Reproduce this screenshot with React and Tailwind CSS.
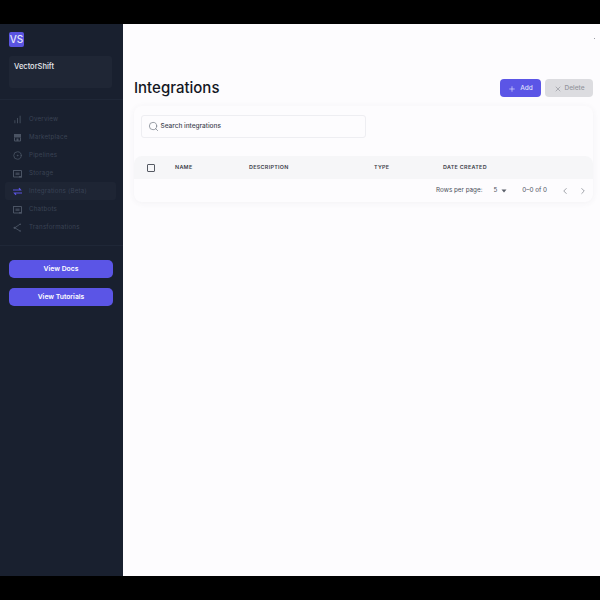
import React from 'react';
import { ChartNoAxesColumnIncreasing, CircleDot, Search, Plus, X, ChevronLeft, ChevronRight } from 'lucide-react';

// Small nav glyphs that lucide has no close match for
const StoreGlyph = ({ className }) => (
  <svg width="9" height="9" viewBox="0 0 9 9" className={className}>
    <path d="M1 1h7v3.5H1z" fill="currentColor" />
    <path d="M1.5 4.5v3.5h6V4.5" fill="none" stroke="currentColor" />
    <path d="M3.5 5.5h2v2.5h-2z" fill="currentColor" />
  </svg>
);

const BoxGlyph = ({ className }) => (
  <svg width="9" height="9" viewBox="0 0 9 9" className={className}>
    <path d="M.5 1.5h8v6.5h-8z" fill="none" stroke="currentColor" />
    <path d="M2.5 3.5h4v2.5h-4z" fill="currentColor" opacity="0.7" />
    <path d="M0 1h3v1H0zM6 7h3v1.5H6z" fill="currentColor" />
  </svg>
);

const BarsGlyph = ({ className }) => (
  <svg width="9" height="9" viewBox="0 0 9 9" className={className}>
    <path d="M0 3h7.5L6 1.2M9 6H1.5L3 7.8" fill="none" stroke="currentColor" strokeWidth="1.2" />
  </svg>
);

const ForkGlyph = ({ className }) => (
  <svg width="9" height="9" viewBox="0 0 9 9" className={className}>
    <path d="M7 1.2 1.8 4.8 7 8" fill="none" stroke="currentColor" strokeWidth="0.9" />
    <circle cx="1.6" cy="4.8" r="1.1" fill="currentColor" />
    <circle cx="7.2" cy="1.2" r="0.8" fill="currentColor" />
    <circle cx="7.2" cy="8" r="0.8" fill="currentColor" />
  </svg>
);

const NAV_ITEMS = [
  { label: 'Overview', icon: ChartNoAxesColumnIncreasing },
  { label: 'Marketplace', icon: StoreGlyph },
  { label: 'Pipelines', icon: CircleDot },
  { label: 'Storage', icon: BoxGlyph },
  { label: 'Integrations (Beta)', icon: BarsGlyph, active: true },
  { label: 'Chatbots', icon: BoxGlyph },
  { label: 'Transformations', icon: ForkGlyph },
];

const COLUMNS = [
  { label: 'NAME', width: 'w-[74px]' },
  { label: 'DESCRIPTION', width: 'w-[125px]' },
  { label: 'TYPE', width: 'w-[69px]' },
  { label: 'DATE CREATED', width: 'w-[100px]' },
];

const Sidebar = () => (
  <aside className="w-[123px] shrink-0 bg-[#19202f] flex flex-col">
    {/* Logo */}
    <div className="pt-[8px] pl-[9px]">
      <div className="w-[15px] h-[15px] rounded-[2px] bg-[#5a54e0] text-[#e4e6fa] text-[10px] leading-[15px] text-center font-medium">VS</div>
    </div>

    {/* Workspace box */}
    <div className="mt-[9px] mx-[9px] h-[32px] w-[103px] rounded-[3px] bg-[#1f2635] px-[5px] pt-[5px]">
      <span className="block text-[7.5px] leading-[12px] font-medium text-[#e8e9ee]">VectorShift</span>
    </div>

    <div className="mt-[11px] h-px bg-[#1f2737]" />

    {/* Nav */}
    <nav className="mt-[10px] flex flex-col pl-[5px] pr-[7px]">
      {NAV_ITEMS.map(({ label, icon: Icon, active }) => (
        <div key={label} className={`h-[18px] flex items-center pl-[8px] rounded-[3px] ${active ? 'bg-[#1e2534]' : ''}`}>
          <Icon size={9} strokeWidth={2.25} className={active ? 'text-[#5a54e0]' : 'text-[#4a5363]'} />
          <span className="ml-[7px] text-[6.2px] tracking-[0.2px] text-[#3a4354]">{label}</span>
        </div>
      ))}
    </nav>

    <div className="mt-[9px] h-px bg-[#1f2737]" />

    {/* Links */}
    <div className="mt-[14px] px-[9px] flex flex-col gap-[10px]">
      <button className="h-[18px] w-[104px] rounded-[5px] bg-[#5b55e6] text-white text-[6.8px] font-semibold">View Docs</button>
      <button className="h-[18px] w-[104px] rounded-[5px] bg-[#5b55e6] text-white text-[6.8px] font-semibold">View Tutorials</button>
    </div>
  </aside>
);

const IntegrationsTable = () => (
  <div className="mt-[9px] rounded-[8px] bg-[#fdfcfe] shadow-[0_1px_6px_rgba(60,60,90,0.06)]">
    <div className="px-[7px] pt-[9px] pb-[18px]">
      <div className="w-[225px] h-[23px] border border-[#eeeef2] rounded-[3px] flex items-center pl-[6px]">
        <Search size={11} strokeWidth={1.5} className="text-[#6f7680]" />
        <span className="ml-[1.5px] pt-[1px] text-[6.5px] font-medium text-[#3f4450]">Search integrations</span>
      </div>
    </div>

    {/* Header row */}
    <div className="h-[23px] bg-[#f6f6f8] rounded-t-[8px] flex items-center pl-[13px]">
      <div className="w-[6px] h-[6px] border-[1.5px] border-[#555a63] rounded-[1px] box-content mr-[20px]" />
      {COLUMNS.map(col => (
        <span key={col.label} className={`${col.width} text-[5.4px] font-semibold tracking-[0.3px] text-[#3c404a]`}>{col.label}</span>
      ))}
    </div>

    {/* Pagination */}
    <div className="h-[23px] flex items-center justify-end text-[6.3px] text-[#4a4f5a] pr-[5px]">
      <span>Rows per page:</span>
      <span className="ml-[11px]">5</span>
      <svg width="6" height="4" viewBox="0 0 6 4" className="ml-[4px]">
        <path d="M0.5 0.5h5L3 3.5z" fill="#5a5f69" />
      </svg>
      <span className="ml-[15px]">0–0 of 0</span>
      <ChevronLeft size={10} strokeWidth={1.75} className="ml-[13px] text-[#7d818a]" />
      <ChevronRight size={10} strokeWidth={1.75} className="ml-[8px] text-[#7d818a]" />
    </div>
  </div>
);

const App = () => (
  <div className="w-[600px] h-[600px] bg-black flex flex-col overflow-hidden" style={{ fontFamily: 'Inter, "Liberation Sans", sans-serif' }}>
    <div className="h-[24px] shrink-0" />
    <div className="h-[552px] shrink-0 flex">
      <Sidebar />
      <main className="relative flex-1 bg-[#fdfcfe] pl-[11px] pr-[7px] pt-[55px]">
        <div className="absolute top-[14px] right-[5px] w-px h-px bg-[#9a9ca3]" />
        <div className="h-[18px] flex items-center justify-between">
          <h1 className="pt-[1px] text-[15px] font-medium text-[#14171f]">Integrations</h1>
          <div className="flex gap-[4px]">
            <button className="h-[18px] w-[41px] pt-[1px] rounded-[4px] bg-[#5b55e6] text-[#dfe0fb] text-[6.5px] font-medium flex items-center justify-center gap-[4px]">
              <Plus size={8} strokeWidth={2} />
              Add
            </button>
            <button className="h-[18px] w-[48px] pt-[1px] rounded-[4px] bg-[#dcdce0] text-[#92949c] text-[6.5px] font-medium flex items-center justify-center gap-[3px]">
              <X size={8} strokeWidth={2} />
              Delete
            </button>
          </div>
        </div>
        <IntegrationsTable />
      </main>
    </div>
    <div className="flex-1" />
  </div>
);

export default App;
